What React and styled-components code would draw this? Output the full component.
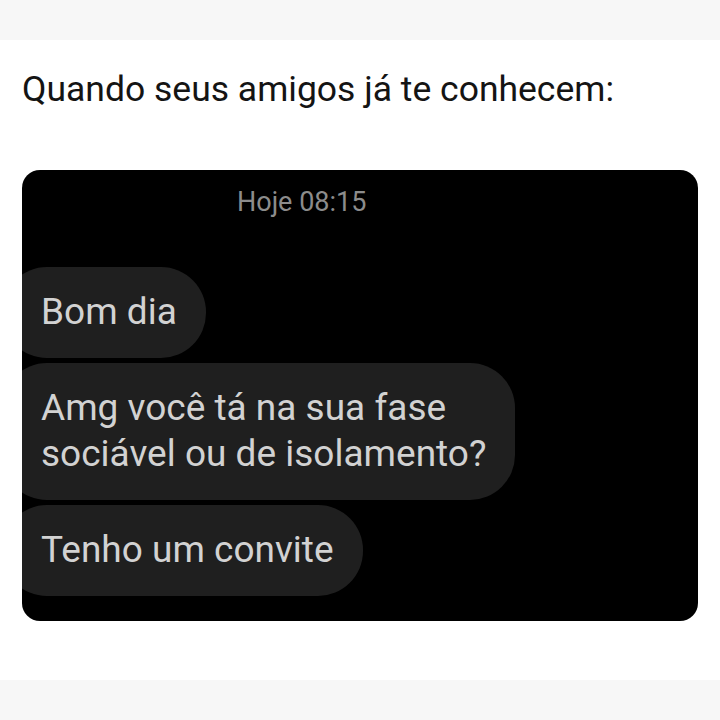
import React from 'react';
import styled, { createGlobalStyle } from 'styled-components';

const GlobalStyle = createGlobalStyle`
  body {
    margin: 0;
    background: #ffffff;
    font-family: Roboto, "Liberation Sans", sans-serif;
  }
`;

const Page = styled.div`
  width: 720px;
  height: 720px;
  display: flex;
  flex-direction: column;
  background: #ffffff;
  overflow: hidden;
`;

const Band = styled.div`
  height: 40px;
  flex-shrink: 0;
  background: #f7f7f7;
`;

const Post = styled.div`
  flex: 1;
  padding: 0 22px;
  display: flex;
  flex-direction: column;
`;

const Title = styled.h1`
  margin: 28px 0 0;
  font-family: Roboto, "Liberation Sans", sans-serif;
  font-weight: 400;
  font-size: 35.5px;
  line-height: 42px;
  color: #141414;
`;

const ChatCard = styled.div`
  margin-top: 60px;
  height: 451px;
  background: #000000;
  border-radius: 18px;
  overflow: hidden;
  display: flex;
  flex-direction: column;
  align-items: flex-start;
  box-sizing: border-box;
`;

const Stamp = styled.div`
  margin: 12px 0 0 215px;
  font-size: 27px;
  line-height: 40px;
  color: #8c8c8c;
`;

const Messages = styled.div`
  margin-top: 45px;
  display: flex;
  flex-direction: column;
  align-items: flex-start;
  gap: 5px;
`;

const Bubble = styled.div`
  margin-left: -20px;
  padding: 22px 29px 23px 39px;
  background: #1f1f1f;
  border-radius: 45px;
  color: #d2d2d2;
  font-size: 37px;
  line-height: 46px;
  white-space: pre-line;
`;

const messages = [
  'Bom dia',
  'Amg você tá na sua fase\nsociável ou de isolamento?',
  'Tenho um convite',
];

export default function App() {
  return (
    <Page>
      <GlobalStyle />
      <Band />
      <Post>
        <Title>Quando seus amigos já te conhecem:</Title>
        <ChatCard>
          <Stamp>Hoje 08:15</Stamp>
          <Messages>
            {messages.map((text) => (
              <Bubble key={text}>{text}</Bubble>
            ))}
          </Messages>
        </ChatCard>
      </Post>
      <Band />
    </Page>
  );
}
